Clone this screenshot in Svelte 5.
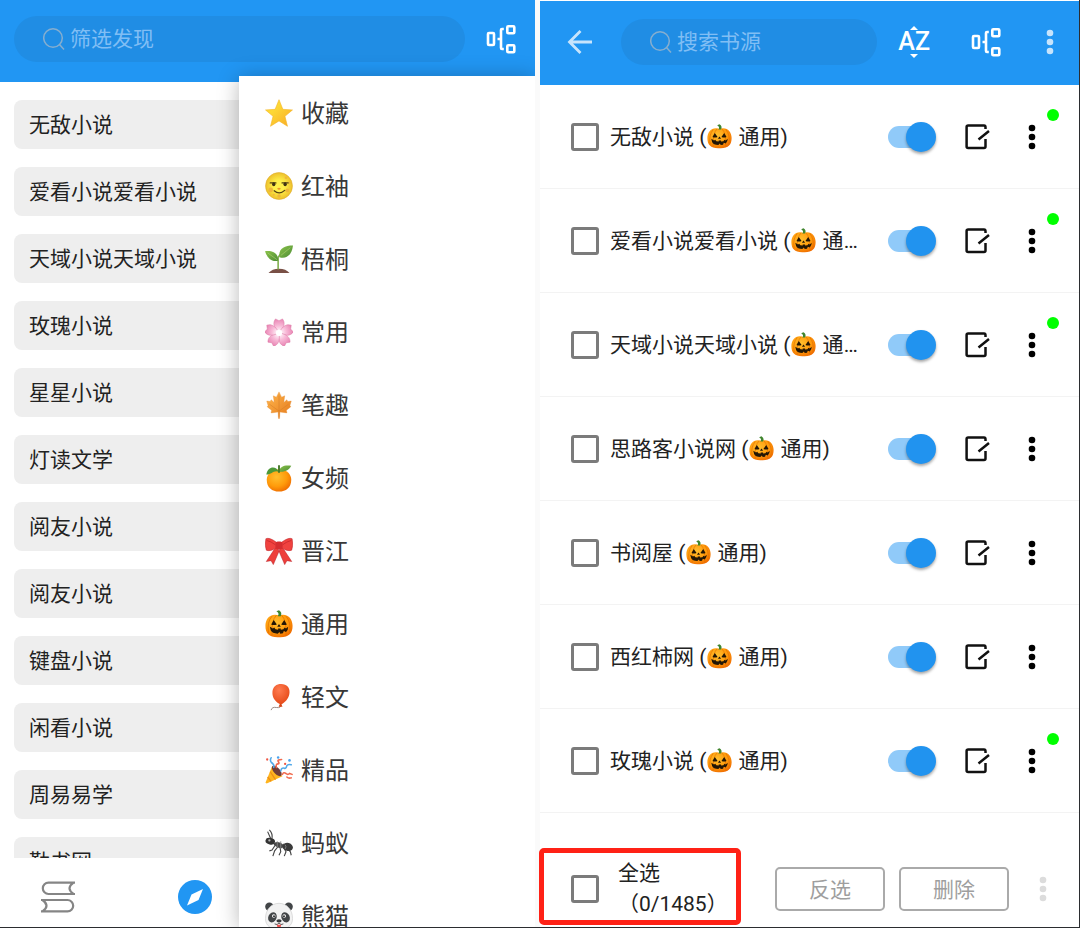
<script>
  const books = [
    '无敌小说', '爱看小说爱看小说', '天域小说天域小说', '玫瑰小说', '星星小说', '灯读文学',
    '阅友小说', '阅友小说', '键盘小说', '闲看小说', '周易易学', '勤书网'
  ];

  const groups = [
    { icon: 'star', name: '收藏' },
    { icon: 'moon', name: '红袖' },
    { icon: 'seedling', name: '梧桐' },
    { icon: 'blossom', name: '常用' },
    { icon: 'maple', name: '笔趣' },
    { icon: 'tangerine', name: '女频' },
    { icon: 'ribbon', name: '晋江' },
    { icon: 'pumpkin', name: '通用' },
    { icon: 'balloon', name: '轻文' },
    { icon: 'party', name: '精品' },
    { icon: 'ant', name: '蚂蚁' },
    { icon: 'panda', name: '熊猫' }
  ];

  let sources = $state([
    { name: '无敌小说', explore: true, enabled: true, picked: false },
    { name: '爱看小说爱看小说', explore: true, enabled: true, picked: false },
    { name: '天域小说天域小说', explore: true, enabled: true, picked: false },
    { name: '思路客小说网', explore: false, enabled: true, picked: false },
    { name: '书阅屋', explore: false, enabled: true, picked: false },
    { name: '西红柿网', explore: false, enabled: true, picked: false },
    { name: '玫瑰小说', explore: true, enabled: true, picked: false }
  ]);
</script>

{#snippet emoji(name)}
  <svg class="emoji" viewBox="0 0 32 32" aria-hidden="true"><use href={'#' + name} /></svg>
{/snippet}

{#snippet magnifier()}
  <svg class="magnifier" viewBox="0 0 22 24" aria-hidden="true">
    <circle cx="10" cy="11" r="9.3" /><path d="M16.5 17.5L21 22.5" />
  </svg>
{/snippet}

{#snippet groupIcon()}
  <svg width="30" height="30" viewBox="0 0 30 30" fill="none" stroke="#fff" stroke-width="2.6" aria-hidden="true">
    <rect x="2" y="9" width="6" height="12" rx="1" />
    <path d="M17.8 5H16Q15 5 15 6V24Q15 25 16 25H17.8M11.5 15H15" />
    <rect x="21.3" y="2.2" width="7" height="7" rx="1" />
    <rect x="21.3" y="21.2" width="7" height="7" rx="1" />
  </svg>
{/snippet}

{#snippet dots()}
  <svg width="8" height="26" viewBox="0 0 8 26" fill="currentColor" aria-hidden="true">
    <circle cx="4" cy="4" r="3.3" /><circle cx="4" cy="13" r="3.3" /><circle cx="4" cy="22" r="3.3" />
  </svg>
{/snippet}

<svg class="defs" width="0" height="0" aria-hidden="true">
  <defs>
    <linearGradient id="gold" x1="0" y1="0" x2="1" y2="1"><stop offset=".35" stop-color="#fdd835" /><stop offset="1" stop-color="#f9a825" /></linearGradient>
    <radialGradient id="moonlight"><stop offset=".4" stop-color="#fff04a" /><stop offset="1" stop-color="#edc02c" /></radialGradient>
    <linearGradient id="leaf" x1="0" y1="0" x2="1" y2="1"><stop offset="0" stop-color="#8bc34a" /><stop offset="1" stop-color="#4c8c35" /></linearGradient>
    <radialGradient id="petal" gradientUnits="userSpaceOnUse" cx="16" cy="16" r="16"><stop offset="0" stop-color="#fff" /><stop offset=".45" stop-color="#f8bbd8" /><stop offset="1" stop-color="#e77fb0" /></radialGradient>
    <radialGradient id="orange" cx=".4" cy=".35" r=".7"><stop offset="0" stop-color="#ffbf2e" /><stop offset=".6" stop-color="#ff9b0b" /><stop offset="1" stop-color="#ef6c00" /></radialGradient>
    <radialGradient id="rubber" cx=".4" cy=".3" r=".7"><stop offset="0" stop-color="#ff7b50" /><stop offset="1" stop-color="#e64a19" /></radialGradient>
    <linearGradient id="autumn" x1="0" y1="0" x2="1" y2="1"><stop offset="0" stop-color="#ffb74d" /><stop offset="1" stop-color="#e57a1c" /></linearGradient>
  </defs>
  <symbol id="star" viewBox="0 0 32 32">
    <path d="M16 .8L20.4 11.8L31.4 12.5L22.8 19.8L25.7 31.2L16 25L6.3 31.2L9.2 19.8L.6 12.5L11.6 11.8Z" fill="url(#gold)" stroke="#f5b629" stroke-width=".7" stroke-linejoin="round" />
  </symbol>
  <symbol id="moon" viewBox="0 0 32 32">
    <circle cx="16" cy="16" r="15.4" fill="url(#moonlight)" stroke="#dca82c" stroke-width=".6" />
    <g fill="#efb73a"><circle cx="6.5" cy="20.5" r="2.7" /><circle cx="25.5" cy="21" r="2.2" /><circle cx="24" cy="6.5" r="1.5" /><circle cx="28.5" cy="12" r="1.2" /><circle cx="16" cy="27.5" r="2" /><circle cx="10" cy="26" r="1.2" /></g>
    <path d="M14.5 18.5Q16 20 17.5 18.5" fill="none" stroke="#ec942b" stroke-width="1.8" />
    <path d="M6 12.5H12.500M19.500 12.500H26.500M10.5 21.5Q16.5 26.500 22.5 21" fill="none" stroke="#554314" stroke-width="1.5" stroke-linecap="round" />
    <ellipse cx="10" cy="14" rx="1.9" ry="2.2" fill="#403313" /><ellipse cx="23" cy="14" rx="1.9" ry="2.2" fill="#403313" />
  </symbol>
  <symbol id="seedling" viewBox="0 0 32 32">
    <path d="M4 32Q8 27 16 27Q24 27 28 32Z" fill="#795046" />
    <path d="M15 28V14Q18 9 27 5" fill="none" stroke="#7fae4c" stroke-width="1.8" />
    <path d="M15 18C6 20 2 13 0 7C9 6 15 9 15 18Z" fill="url(#leaf)" />
    <path d="M16.5 14C15 4 22 .5 32 .5C31 10 25 17 16.5 14Z" fill="url(#leaf)" />
    <path d="M3 9L14 17M18 12L29 3" stroke="#a6cd6b" stroke-width=".8" />
  </symbol>
  <symbol id="blossom" viewBox="0 0 32 32">
    <g fill="url(#petal)" stroke="#d9709f" stroke-width=".5">
      <path id="petal-shape" d="M16 17C9 10 9 5 12 1L16 3L20 1C23 5 23 10 16 17Z" />
      <use href="#petal-shape" transform="rotate(72 16 17)" /><use href="#petal-shape" transform="rotate(144 16 17)" />
      <use href="#petal-shape" transform="rotate(216 16 17)" /><use href="#petal-shape" transform="rotate(288 16 17)" />
    </g>
    <circle cx="16" cy="17" r="3.5" fill="#fff" />
  </symbol>
  <symbol id="maple" viewBox="0 0 32 32">
    <path d="M16 1L19 7L22.5 5.5L21.5 13L25 10L26 12L30 11.5L28.500 16.5L29.5 18L24.500 22L25 25L17 24L16.6 31.5H15.4L15 24L7 25L7.500 22L2.5 18L3.500 16.5L2 11.5L6 12L7 10L10.5 13L9.5 5.5L13 7Z" fill="url(#autumn)" stroke="#e58b2d" stroke-width=".4" />
    <path d="M16 5V30M16 23L5 15M16 23L27 15" fill="none" stroke="#d57d26" stroke-width=".6" />
  </symbol>
  <symbol id="tangerine" viewBox="0 0 32 32">
    <path d="M16 6C25 6 30 12 30 18C30 27 24 31.5 16 31.5C8 31.5 2 27 2 18C2 12 7 6 16 6Z" fill="url(#orange)" />
    <path d="M16 9C12 1 3 3 1.5 12C8 12 10 6 16 9Z" fill="#4d9838" />
    <path d="M16 9C17 2 23 1 30 2C27 8 22 9 16 9Z" fill="url(#leaf)" />
    <path d="M16 10V1.5" stroke="#477b2c" stroke-width="2.2" />
  </symbol>
  <symbol id="ribbon" viewBox="0 0 32 32">
    <path d="M12 12L1.5 28L7 27L9.5 31.5L17 14ZM20 12L30.5 28L25 27L22.5 31.5L15 14Z" fill="#ee3f3b" stroke="#b91f26" stroke-width=".6" />
    <path d="M13 6Q5 0 1 2Q-.5 10 1.5 15Q7 17 13 12ZM19 6Q27 0 31 2Q32.500 10 30.500 15Q25 17 19 12Z" fill="#f0423f" stroke="#bb2127" stroke-width=".6" />
    <path d="M2 4Q7 5 12 9M30 4Q25 5 20 9" stroke="#c3242a" stroke-width=".8" fill="none" />
    <rect x="12" y="5" width="8" height="9" rx="2.500" fill="#d52d30" />
  </symbol>
  <symbol id="pumpkin" viewBox="0 0 32 32">
    <path d="M16 6C26 3 31.500 10 31.500 18C31.500 27 27 31.500 16 31C5 31.500 .5 27 .5 18C.5 10 6 3 16 6Z" fill="url(#orange)" />
    <path d="M13 6Q7 12 8 29M19 6Q25 12 24 29M8 7Q2 14 4 26M24 7Q30 14 28 26" fill="none" stroke="#e06d00" stroke-width=".8" />
    <path d="M14.500 7Q17 4 13 1.500L16 .4Q20 3 18 7Z" fill="#40852f" />
    <path d="M10 11.500L13.500 16.500Q10 18 7 16.500ZM22 11.500L25 16.500Q22 18 18.500 16.500ZM16 16L18 19H14Z" fill="#231605" />
    <path d="M5.500 19L9 21L10.500 20L12 22L15 22.500V21H18V22.500L21 22L22.500 20L24 21L26.500 19Q26.500 23 24 25L21.500 24L20.500 26.500L17.500 27L16.500 25L14.500 27Q8 26.500 6.500 23Z" fill="#231605" />
  </symbol>
  <symbol id="balloon" viewBox="0 0 32 32">
    <path d="M18 24Q19 29 13 28Q8 27 7 31" fill="none" stroke="#8e7b75" stroke-width="1" />
    <path d="M18.500 1C25 1 28.500 5 28 11C27.500 18 22 23 18 24.500C12 22 8 17 8.500 10C9 4 13 1 18.500 1Z" fill="url(#rubber)" />
    <path d="M17 24L15.500 27H20L18.500 24Z" fill="#d84315" />
  </symbol>
  <symbol id="party" viewBox="0 0 32 32">
    <path d="M8 12L.5 30.500L2 31.500L20 23Z" fill="#ffb51f" />
    <path d="M6 18L12 27M3 24L7 29" stroke="#ef8e16" stroke-width="1.500" />
    <ellipse cx="13.500" cy="17" rx="3.500" ry="7.500" transform="rotate(-42 13.500 17)" fill="#713d38" />
    <g fill="none" stroke-width="1.800" stroke-linecap="round">
      <path d="M10 13Q11 10 8 8Q5 6 7 2M18 17Q19 13 22 14Q24 15 25 11Q26 9 30 10" stroke="#52a9e9" />
      <path d="M13 13Q12 9 15 9Q17 9 15 6Q14 4 19 4M20 21Q21 18 24 20Q26 22 28 20L31 21M25 24Q27 26 30 25" stroke="#f16a4d" />
    </g>
    <g fill="#4aa3ee"><circle cx="15" cy="1.800" r="1.400" /><circle cx="28" cy="5" r="1.500" /></g><circle cx="2.500" cy="4" r="1.300" fill="#ef5744" /><circle cx="23" cy="9" r="1.300" fill="#ef5744" />
  </symbol>
  <symbol id="ant" viewBox="0 0 32 32">
    <path d="M7 12L3 3M8 11Q9 5 5 1M12 18L8 24L5 25M15 20L11 25L9 31M17 20L18 26L16 30M20 19L24 26L22 31M21 17L29 26L30 30" fill="none" stroke="#454545" stroke-width="1.300" />
    <ellipse cx="6" cy="14" rx="5.500" ry="3.700" transform="rotate(12 6 14)" fill="#333" />
    <path d="M10 16Q16 13 21 18L20 22Q14 22 10 18Z" fill="#484848" />
    <ellipse cx="26" cy="20.500" rx="6" ry="4.600" transform="rotate(15 26 20.500)" fill="#3b3b3b" />
    <path d="M14 14V21M18 14V22M23 18Q25 20 23 23" stroke="#888" stroke-width="1" fill="none" /><circle cx="5" cy="13" r="1.300" fill="#b6b6b6" />
  </symbol>
  <symbol id="panda" viewBox="0 0 32 32">
    <circle cx="5" cy="5.500" r="4.800" fill="#424547" /><circle cx="27" cy="5.500" r="4.800" fill="#424547" />
    <path d="M16 1.500C25 1.500 31.500 9 31.500 19C31.500 27 25 31.500 16 31.500C7 31.500 .5 27 .5 19C.5 9 7 1.500 16 1.500Z" fill="#f2f2f2" stroke="#cbcbcb" stroke-width=".7" />
    <ellipse cx="8.500" cy="17.500" rx="4.700" ry="6" transform="rotate(25 8.500 17.500)" fill="#424547" /><ellipse cx="23.500" cy="17.500" rx="4.700" ry="6" transform="rotate(-25 23.500 17.500)" fill="#424547" />
    <circle cx="10" cy="16" r="2" fill="#fff" /><circle cx="22" cy="16" r="2" fill="#fff" /><circle cx="10.300" cy="16.300" r="1.100" fill="#222" /><circle cx="21.700" cy="16.300" r="1.100" fill="#222" />
    <ellipse cx="16" cy="21.500" rx="3" ry="1.900" fill="#373a3c" /><path d="M11 25Q14 27 16 24Q18 27 21 25" fill="none" stroke="#444" /><path d="M13.500 26H18.500Q18 30 16 30Q14 30 13.500 26Z" fill="#ef5350" />
  </symbol>
</svg>

<main class="screens">
  <section class="phone discover">
    <header class="bar">
      <label class="search">
        {@render magnifier()}
        <input type="text" placeholder="筛选发现" aria-label="筛选发现" />
      </label>
      <button class="plain" aria-label="分组">{@render groupIcon()}</button>
    </header>

    <ul class="books">
      {#each books as book}
        <li><button class="book">{book}</button></li>
      {/each}
    </ul>

    <nav class="tabs">
      <button class="plain" aria-label="书架">
        <svg width="34" height="34" viewBox="0 0 34 34" fill="none" stroke="#858585" stroke-width="2.200" aria-hidden="true">
          <path d="M34 2.600H7.500A5.700 5.700 0 0 0 7.500 14H34M32.500 2.600Q24.500 8.300 32.500 14" />
          <path d="M0 20H26.500A5.700 5.700 0 0 1 26.500 31.400H0M1.500 20Q9.500 25.700 1.500 31.400" />
        </svg>
      </button>
      <button class="plain" aria-label="发现">
        <svg width="34" height="34" viewBox="0 0 34 34" aria-hidden="true">
          <circle cx="17" cy="17" r="17" fill="#2196f3" />
          <path d="M25 9L20.500 20L9 25.500L13.500 14.500Z" fill="#fff" />
        </svg>
      </button>
    </nav>

    <div class="menu" role="menu">
      {#each groups as group}
        <button class="entry" role="menuitem">{@render emoji(group.icon)}<span>{group.name}</span></button>
      {/each}
    </div>
  </section>

  <section class="phone manage">
    <header class="bar">
      <button class="plain back" aria-label="返回">
        <svg width="26" height="26" viewBox="0 0 26 26" fill="none" stroke="currentColor" stroke-width="2.800" aria-hidden="true">
          <path d="M25 13H3M13.500 2L2.500 13L13.500 24" />
        </svg>
      </button>
      <label class="search">
        {@render magnifier()}
        <input type="text" placeholder="搜索书源" aria-label="搜索书源" />
      </label>
      <div class="tools">
        <button class="plain sort" aria-label="排序">
          <svg width="8" height="4" viewBox="0 0 8 4" aria-hidden="true"><path d="M4 0L8 4H0Z" fill="#fff" /></svg>
          <span>AZ</span>
          <svg width="8" height="4" viewBox="0 0 8 4" aria-hidden="true"><path d="M0 0H8L4 4Z" fill="#fff" /></svg>
        </button>
        <button class="plain" aria-label="分组">{@render groupIcon()}</button>
        <button class="plain faded" aria-label="更多">{@render dots()}</button>
      </div>
    </header>

    <ul class="sources">
      {#each sources as source, i}
        <li class="source">
          <input class="tick" type="checkbox" id={'source-' + i} bind:checked={source.picked} />
          <label class="name" for={'source-' + i}>{source.name} ({@render emoji('pumpkin')} 通用)</label>
          <div class="actions">
            <input class="switch" type="checkbox" role="switch" aria-label="启用" bind:checked={source.enabled} />
            <button class="plain" aria-label="编辑">
              <svg width="26" height="26" viewBox="0 0 26 26" fill="none" stroke="#111" stroke-width="2.500" aria-hidden="true">
                <path d="M20.500 5V3.200Q20.500 1.500 19 1.500H3.200Q1.600 1.500 1.600 3V22.600Q1.600 24 3.200 24H19Q20.500 24 20.500 22.600V15M13.500 15.500L24 7" />
              </svg>
            </button>
            <button class="plain more" aria-label="更多">{@render dots()}</button>
          </div>
          {#if source.explore}<span class="badge"></span>{/if}
        </li>
      {/each}
    </ul>

    <footer class="selection">
      <label class="all">
        <input class="tick" type="checkbox" />
        <span>全选<br />（0/1485）</span>
      </label>
      <div class="batch">
        <button class="outlined">反选</button>
        <button class="outlined">删除</button>
        <button class="plain overflow" aria-label="更多">{@render dots()}</button>
      </div>
    </footer>
  </section>
</main>

<style>
  :global(body) { margin: 0; background: #fafafa; }
  .defs { position: absolute; }
  .screens, .screens * { box-sizing: border-box; }
  .screens {
    display: grid;
    grid-template-columns: 535fr 539fr;
    gap: 5px;
    height: 100vh;
    border-right: 1px solid #2b2d30;
    border-bottom: 1px solid #2b2d30;
    font-family: Roboto, "Noto Sans CJK SC", sans-serif;
    font-size: 21px;
    color: #222;
  }
  button, input { font: inherit; color: inherit; }
  ul { list-style: none; margin: 0; padding: 0; }
  svg { display: block; flex: none; }

  .phone {
    position: relative;
    display: flex;
    flex-direction: column;
    min-width: 0;
    min-height: 0;
    background: #fff;
  }
  .discover { overflow: hidden; }
  .plain {
    display: flex;
    align-items: center;
    justify-content: center;
    padding: 0;
    border: 0;
    background: none;
    cursor: pointer;
  }
  .bar { display: flex; align-items: center; flex: none; background: #2196f3; color: #fff; }
  .search {
    display: flex;
    align-items: center;
    gap: 5px;
    flex: 1;
    min-width: 0;
    height: 46px;
    padding: 0 29px;
    border-radius: 23px;
    background: #208de4;
  }
  .search input { flex: 1; min-width: 0; padding: 0; border: 0; outline: 0; background: none; }
  .search input::placeholder { color: #80bef4; opacity: 1; }
  .magnifier { width: 22px; height: 24px; fill: none; stroke: #86aecf; stroke-width: 1.5; }

  .discover .bar { gap: 21px; height: 82px; padding: 0 19px 4px 14px; }
  .books {
    display: flex;
    flex-direction: column;
    gap: 18px;
    flex: 1;
    min-height: 0;
    padding: 18px 14px 0;
    overflow: hidden;
  }
  .book {
    display: block;
    width: 100%;
    height: 49px;
    padding: 0 15px 3px;
    border: 0;
    border-radius: 8px;
    background: #eee;
    text-align: left;
  }
  .tabs { display: flex; align-items: center; gap: 103px; flex: none; height: 69px; padding: 8px 41px 0; }
  .menu {
    position: absolute;
    top: 76px;
    right: 0;
    bottom: 0;
    left: 239px;
    overflow: hidden;
    background: #fff;
    box-shadow: 0 2px 20px rgba(0, 0, 0, 0.28);
  }
  .entry {
    display: flex;
    align-items: center;
    gap: 8px;
    width: 100%;
    height: 73px;
    padding: 0 26px;
    border: 0;
    background: none;
    font-size: 24px;
    color: #383838;
  }
  .entry .emoji { width: 28px; height: 28px; }
  .entry span { padding-bottom: 2px; }

  .manage .bar { height: 84px; margin-top: 1px; padding: 0 21px 2px 25px; }
  .back { margin: 0 28px 0 2px; opacity: 0.75; }
  .tools { display: flex; align-items: center; gap: 41px; margin-left: 21px; }
  .sort { flex-direction: column; gap: 2px; font-size: 25px; line-height: 20px; font-weight: 500; }
  .faded { width: 16px; opacity: 0.75; }

  .sources { flex: 1; min-height: 0; overflow: hidden; }
  .source {
    position: relative;
    display: flex;
    align-items: center;
    height: 104px;
    padding: 0 35px 0 31px;
    border-bottom: 1px solid #f3f3f3;
  }
  .tick {
    appearance: none;
    flex: none;
    width: 28px;
    height: 28px;
    margin: 0;
    border: 3px solid #7b7b7b;
    border-radius: 3px;
  }
  .tick:checked { border-color: #2196f3; background: #2196f3; }
  .name {
    flex: 1;
    min-width: 0;
    margin-left: 11px;
    padding-bottom: 3px;
    overflow: hidden;
    text-overflow: ellipsis;
    white-space: nowrap;
  }
  .name .emoji { display: inline-block; width: 25px; height: 25px; margin: 0 1px; vertical-align: -5px; }
  .actions { display: flex; align-items: center; gap: 29px; margin-left: 28px; }
  .switch { appearance: none; display: grid; align-items: center; width: 48px; height: 30px; margin: 0; }
  .switch::before, .switch::after { content: ""; grid-area: 1 / 1; }
  .switch::before { width: 42px; height: 22px; border-radius: 11px; background: #c4c4c4; }
  .switch::after {
    width: 30px;
    height: 30px;
    border-radius: 50%;
    background: #f1f1f1;
    box-shadow: 0 2px 3px rgba(0, 0, 0, 0.35);
  }
  .switch:checked::before { background: #90caf9; }
  .switch:checked::after { justify-self: end; background: #2193ef; }
  .more { width: 24px; color: #000; }
  .badge {
    position: absolute;
    top: 24px;
    right: 20px;
    width: 12px;
    height: 12px;
    border-radius: 50%;
    background: #0f0;
  }

  .selection { display: flex; align-items: center; justify-content: space-between; flex: none; padding: 0 16px 2px 0; }
  .all {
    display: flex;
    align-items: center;
    gap: 19px;
    width: 202px;
    height: 77px;
    margin-left: -1px;
    padding: 5px 0 0 27px;
    border: 5px solid #ff2116;
    border-radius: 5px;
    line-height: 31px;
    white-space: nowrap;
  }
  .batch { display: flex; gap: 14px; padding-top: 4px; }
  .outlined {
    width: 110px;
    height: 44px;
    padding: 0 0 2px;
    border: 2px solid #aaa;
    border-radius: 5px;
    background: #fff;
    color: #9e9e9e;
  }
  .overflow { width: 40px; color: #dcdcdc; }
</style>
